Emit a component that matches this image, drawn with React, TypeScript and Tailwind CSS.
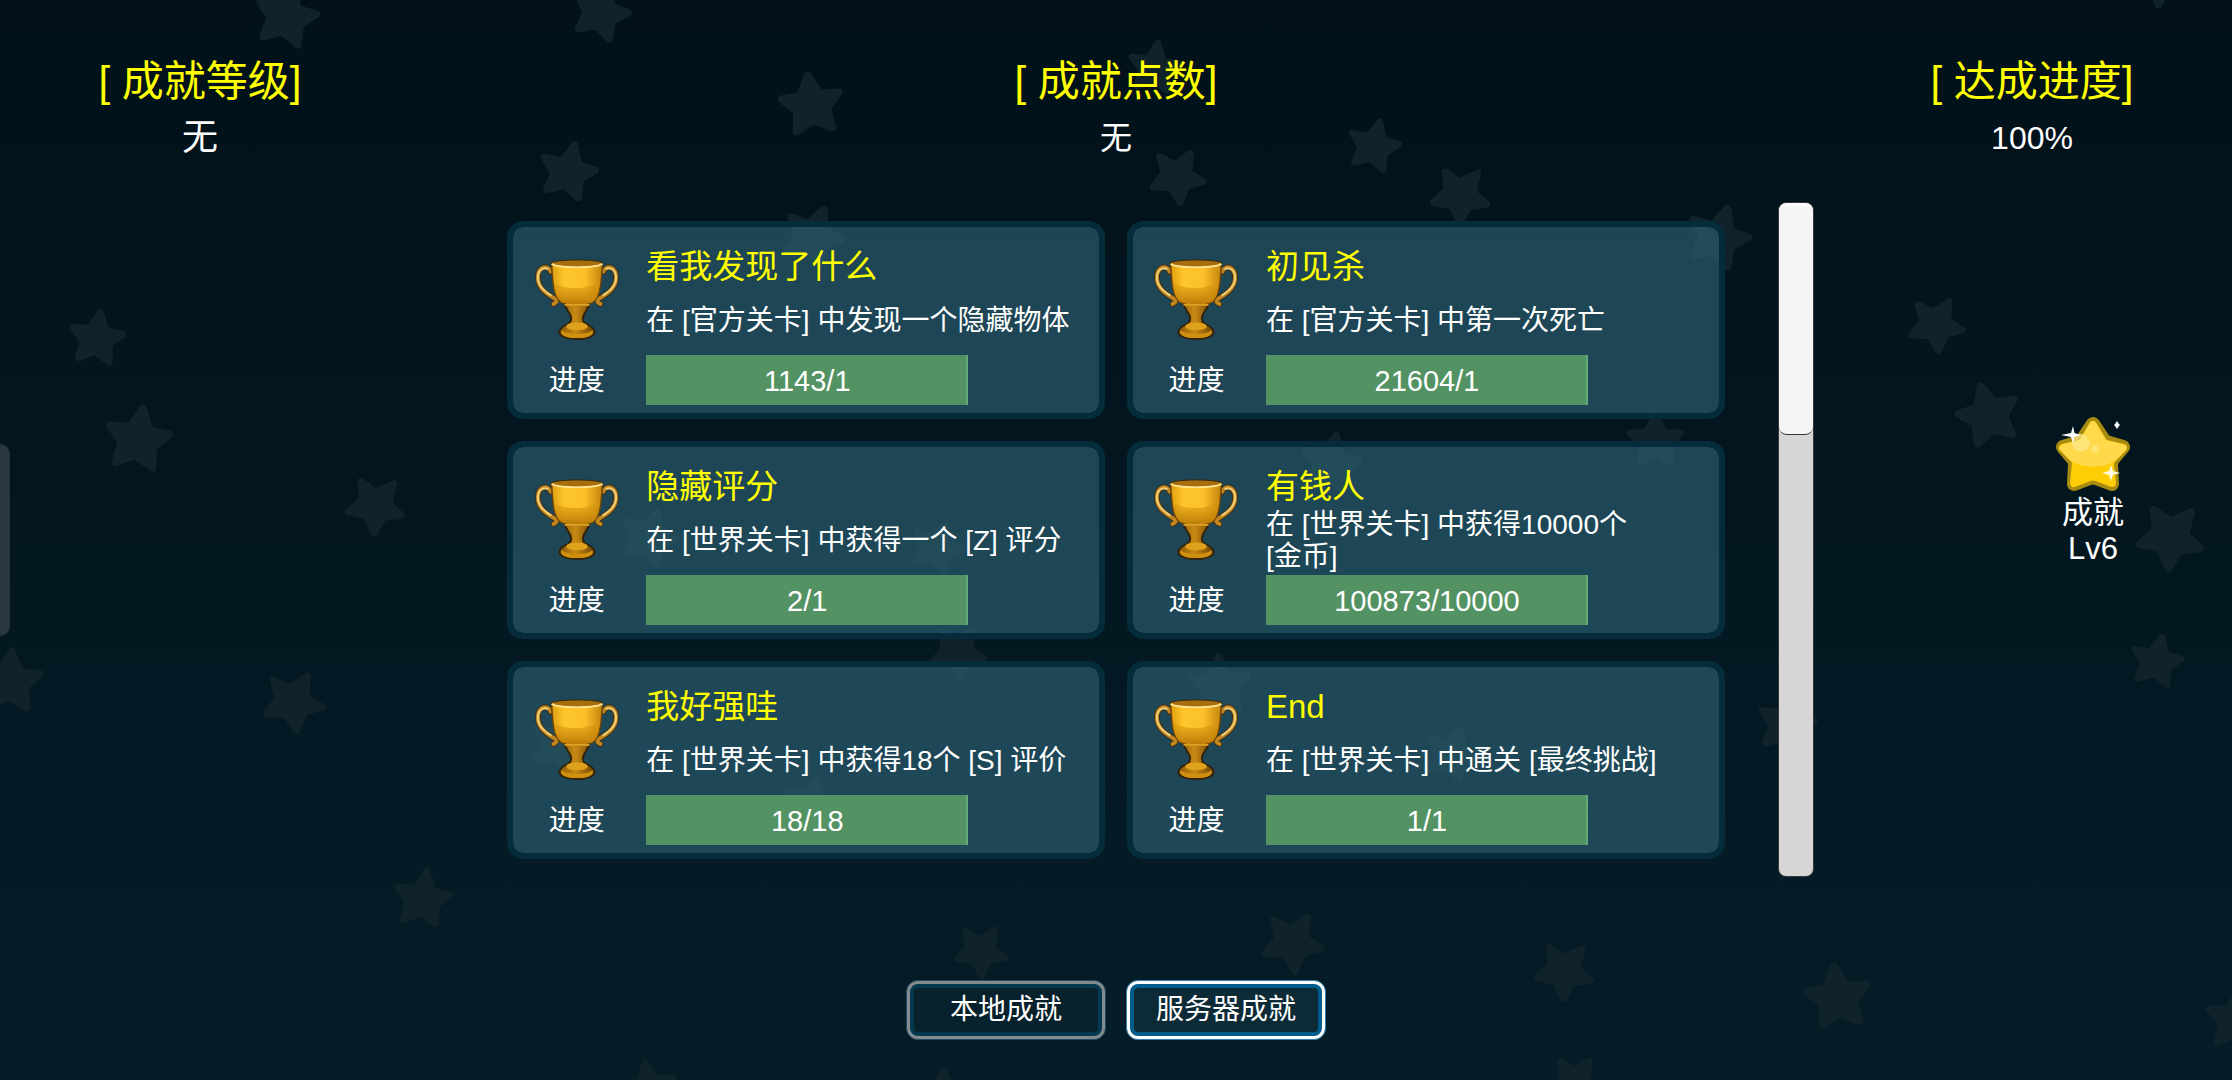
import React, { useState } from "react";

type Achievement = {
  id: number;
  title: string;
  desc: string;
  current: number;
  target: number;
};

const achievements: Achievement[] = [
  { id: 1, title: "看我发现了什么", desc: "在 [官方关卡] 中发现一个隐藏物体", current: 1143, target: 1 },
  { id: 2, title: "初见杀", desc: "在 [官方关卡] 中第一次死亡", current: 21604, target: 1 },
  { id: 3, title: "隐藏评分", desc: "在 [世界关卡] 中获得一个 [Z] 评分", current: 2, target: 1 },
  { id: 4, title: "有钱人", desc: "在 [世界关卡] 中获得10000个\n[金币]", current: 100873, target: 10000 },
  { id: 5, title: "我好强哇", desc: "在 [世界关卡] 中获得18个 [S] 评价", current: 18, target: 18 },
  { id: 6, title: "End", desc: "在 [世界关卡] 中通关 [最终挑战]", current: 1, target: 1 },
];

const stats = [
  { label: "[ 成就等级]", value: "无", size: "text-[36px]" },
  { label: "[ 成就点数]", value: "无", size: "text-[32px]" },
  { label: "[ 达成进度]", value: "100%", size: "text-[32px]" },
];

const tabs = ["本地成就", "服务器成就"];

// x, y, radius, rotation
const stars = [
  [201, 12, 24, 13], [422, 9, 22, 18], [570, 74, 24, -7], [399, 121, 22, 14],
  [965, 103, 20, 14], [827, 124, 21, 30], [811, 48, 20, 8], [1026, 137, 22, 38],
  [1207, 167, 24, 18], [571, 166, 23, 23], [97, 309, 25, 9], [68, 238, 21, 8],
  [264, 355, 22, 40], [7, 479, 24, 3], [206, 493, 23, 29], [297, 632, 22, 8],
  [456, 378, 22, 18], [658, 385, 20, 20], [673, 458, 21, 32], [393, 523, 22, 20],
  [570, 566, 21, 14], [935, 326, 23, 10], [1163, 310, 21, 0], [1020, 530, 21, 20],
  [857, 482, 23, -3], [1255, 509, 22, 12], [1360, 228, 21, 30], [1397, 292, 24, -15],
  [1525, 377, 25, 40], [1515, 465, 20, 12], [689, 668, 20, 34], [908, 662, 23, 31],
  [1099, 682, 22, 39], [1291, 701, 25, -7], [1107, 760, 20, 34], [1571, 717, 23, 5],
  [663, 770, 20, 0], [456, 765, 21, -8], [1517, -16, 22, 38],
];

function StarField() {
  return (
    <svg
      className="absolute inset-0 h-full w-full"
      viewBox="0 0 1568 759"
      preserveAspectRatio="xMidYMid slice"
      aria-hidden="true"
    >
      <defs>
        <path
          id="bg-star"
          d="M0-20 5.5-8.5Q6.5-7 8-6.8L19-6.2 11 2Q10 3.4 10.3 5L11.8 16.2 2 11Q0 10.2-2 11L-11.8 16.2-10.3 5Q-10 3.4-11 2L-19-6.2-8-6.8Q-6.5-7-5.5-8.5Z"
          strokeWidth="5"
          strokeLinejoin="round"
        />
      </defs>
      {stars.map(([x, y, r, rot], index) => (
        <use
          key={index}
          href="#bg-star"
          fill="#10232a"
          stroke="#10232a"
          transform={`translate(${x} ${y}) rotate(${rot}) scale(${r / 22.5})`}
        />
      ))}
    </svg>
  );
}

function Trophy() {
  return (
    <svg width="86" height="84" viewBox="0 0 88 84" aria-hidden="true">
      <defs>
        <linearGradient id="cup" x1="0" y1="0" x2="1" y2="0">
          <stop offset="0" stopColor="#dd9c10" />
          <stop offset=".25" stopColor="#ffc62c" />
          <stop offset=".65" stopColor="#fbc02a" />
          <stop offset="1" stopColor="#c4830c" />
        </linearGradient>
        <linearGradient id="shade" x1="0" y1="0" x2="0" y2="1">
          <stop offset="0" stopColor="#d9980c" stopOpacity=".3" />
          <stop offset="1" stopColor="#bd7c08" />
        </linearGradient>
        <linearGradient id="stem" x1="0" y1="0" x2="1" y2="0">
          <stop offset="0" stopColor="#8a5808" />
          <stop offset=".45" stopColor="#c98a14" />
          <stop offset="1" stopColor="#6b4205" />
        </linearGradient>
      </defs>
      <g fill="none" strokeLinecap="round">
        <g stroke="#3a2f1c" strokeWidth="6">
          <path d="M17 13C14 5 4 8 4 19 4 31 15 37 22 41Q25 44 20 46" />
          <path d="M71 13C74 5 84 8 84 19 84 31 73 37 66 41Q63 44 68 46" />
        </g>
        <g stroke="#c28620" strokeWidth="4">
          <path d="M17 13C14 5 4 8 4 19 4 31 15 37 22 41Q25 44 20 46" />
          <path d="M71 13C74 5 84 8 84 19 84 31 73 37 66 41Q63 44 68 46" />
        </g>
        <g stroke="#efd07a" strokeWidth="2">
          <path d="M14 10C9 8 4 12 4 19 4 28 11 33 17 37" />
          <path d="M74 10C79 8 84 12 84 19 84 28 77 33 71 37" />
        </g>
      </g>
      <path d="M31 45H57C56 53 50 54 50 61Q50 65 54 67C63 71 64 76 59 79 52 83 36 83 29 79 24 76 25 71 34 67Q38 65 38 61C38 54 32 53 31 45Z" fill="url(#stem)" stroke="#33230c" strokeWidth="2" />
      <path d="M28 73C34 78 54 78 60 73 62 79 54 81 44 81 34 81 26 79 28 73Z" fill="#d0900f" />
      <ellipse cx="44" cy="69" rx="11" ry="4" fill="#dfa01c" />
      <path d="M18 5C19 24 20 38 27 44 34 48 54 48 61 44 68 38 69 24 70 5Z" fill="url(#cup)" stroke="#6b4408" strokeWidth="1.5" />
      <path d="M20 24C34 32 54 32 68 22 66 36 65 41 60 44 54 47 34 47 28 44 23 40 21 34 20 24Z" fill="url(#shade)" />
      <ellipse cx="44" cy="4.5" rx="26.5" ry="3.5" fill="#a66e0c" stroke="#3a2508" strokeWidth="1" />
      <path d="M18 5C25 9.500 63 9.500 70 5" fill="none" stroke="#ffe28a" strokeWidth="2" />
      <path d="M32 47H56" stroke="#e0a325" strokeWidth="2" strokeLinecap="round" />
    </svg>
  );
}

function LevelStar() {
  return (
    <svg width="80" height="80" viewBox="0 0 80 80" aria-hidden="true">
      <path
        d="M40 9 50 24Q51 26 53 27L70 32 59 45Q58 47 58 49L59 69 43 63Q40 62 37 63L21 69 22 49Q22 47 21 45L10 32 27 27Q29 26 30 24Z"
        fill="#a88c12"
        stroke="#a88c12"
        strokeWidth="14"
        strokeLinejoin="round"
      />
      <path
        d="M40 10 49 25Q50 28 53 29L70 33 58 45Q57 47 57 49L59 68 43 62Q40 61 37 62L21 68 23 49Q23 47 22 45L10 33 27 29Q30 28 31 25Z"
        fill="#ffcd05"
        stroke="#ffcd05"
        strokeWidth="8"
        strokeLinejoin="round"
      />
      <path
        d="M40 10 49 25Q50 28 53 29L70 33 60 43C50 50 30 50 20 43L10 33 27 29Q30 28 31 25Z"
        fill="#ffd94a"
        stroke="#ffd94a"
        strokeWidth="7"
        strokeLinejoin="round"
      />
      <circle cx="28" cy="28" r="9" fill="#ffe98c" opacity=".7" />
      <circle cx="42" cy="34" r="4" fill="#ffe470" />
      <path d="M20 11 21.500 18 28 20 21.500 22 20 28 18 22 8 20 18 18Z" fill="#fff" />
      <path d="M58 50 60 56 67 58 60 60 58 66 56 60 49 58 56 56Z" fill="#fffbe0" />
      <path d="M64 6 66 9 67 10 66 11 64 14 62 11 61 10 62 9Z" fill="#fff" />
    </svg>
  );
}

function AchievementCard({ item }: { item: Achievement }) {
  const percent = Math.min(100, (item.current / item.target) * 100);

  return (
    <article className="grid grid-cols-[127px_1fr] gap-1.5 rounded-2xl border-[6px] border-[#052c3a] bg-[#30677b]/60 bg-clip-padding">
      <div className="flex flex-col items-center justify-between pt-[31px] pb-[7px]">
        <Trophy />
        <span className="text-[28px] leading-[50px]">进度</span>
      </div>
      <div className="pt-5 pb-2">
        <h2 className="text-[33px] leading-10 text-[#ffff00]">{item.title}</h2>
        <p className="flex h-17 items-center text-[28px] leading-8 whitespace-pre">{item.desc}</p>
        <div
          className="relative h-[50px] w-[322px] bg-[#5ba374]"
          role="progressbar"
          aria-label={item.title}
          aria-valuenow={Math.min(item.current, item.target)}
          aria-valuemax={item.target}
        >
          <div className="h-full border-r-2 border-[#5fac78] bg-[#539263]" style={{ width: `${percent}%` }} />
          <span className="absolute inset-0 text-center text-[29px] leading-[52px]">
            {item.current}/{item.target}
          </span>
        </div>
      </div>
    </article>
  );
}

function App() {
  const [tab, setTab] = useState(1);

  return (
    <div className="relative flex min-h-screen flex-col overflow-hidden bg-linear-to-b from-[#02111a] to-[#051d27] font-['Liberation_Sans','Noto_Sans_CJK_SC',sans-serif] text-white">
      <StarField />
      <button
        className="absolute top-1/2 left-0 h-48 w-[10px] -translate-y-1/2 rounded-r-[10px] bg-[#28373e]"
        aria-label="菜单"
      />

      <header className="relative flex justify-between px-20 pt-[58px]">
        {stats.map((stat) => (
          <div key={stat.label} className="w-60 space-y-2 text-center">
            <h1 className="text-[42px] leading-12 text-[#ffff00]">{stat.label}</h1>
            <p className={`${stat.size} leading-12`}>{stat.value}</p>
          </div>
        ))}
      </header>

      <main className="relative mt-10 grid grid-cols-[5fr_12fr_5fr]">
        <section className="col-start-2 grid grid-cols-2 gap-[22px] pt-[19px] pb-[18px]">
          {achievements.map((item) => (
            <AchievementCard key={item.id} item={item} />
          ))}
        </section>
        <aside className="flex justify-between pr-[99px] pl-[53px]">
          <div
            className="w-9 overflow-hidden rounded-lg border border-[#33383b] bg-[#d6d6d6]"
            role="scrollbar"
            aria-label="成就"
            aria-valuenow={0}
            aria-controls="root"
          >
            <div className="h-58 rounded-lg border-t-3 border-b border-t-white border-b-[#333] bg-[#f5f5f5]" />
          </div>
          <div className="flex w-20 flex-col items-center pt-[213px] text-center text-[31px] leading-9">
            <LevelStar />
            <span>成就</span>
            <span>Lv6</span>
          </div>
        </aside>
      </main>

      <footer className="relative mt-auto flex justify-center gap-5 pb-10">
        {tabs.map((name, index) => (
          <button
            key={name}
            onClick={() => setTab(index)}
            className={
              tab === index
                ? "h-15 w-50 rounded-xl border border-[#2a7fae] bg-white p-[3px]"
                : "h-15 w-50 rounded-xl border border-[#1f4c62] bg-[#848b8f] p-[3px]"
            }
          >
            <span
              className={
                tab === index
                  ? "flex h-full items-center justify-center rounded-lg border-4 border-[#005d8b] bg-[#0c2b37] text-[28px]"
                  : "flex h-full items-center justify-center rounded-lg border-4 border-[#02394f] bg-[#08222d] text-[28px]"
              }
            >
              {name}
            </span>
          </button>
        ))}
      </footer>
    </div>
  );
}

export default App;
